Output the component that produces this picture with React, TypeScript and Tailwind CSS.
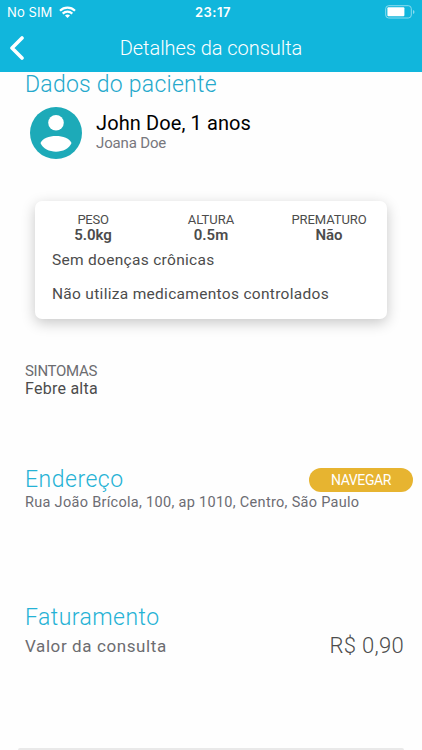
const stats = [
    { label: 'PESO', value: '5.0kg', labelStyle: 'tracking-[-0.3px]' },
    { label: 'ALTURA', value: '0.5m', labelStyle: 'tracking-[0px]' },
    { label: 'PREMATURO', value: 'Não', labelStyle: 'tracking-[-0.1px]' },
];

function StatusBar() {
    return (
        <div className="grid h-6 grid-cols-3 items-center pl-[7px] pr-[7px] text-[13px] leading-6 font-['Inter',sans-serif]">
            <div className="flex items-center gap-[7px]">
                <span className="tracking-[0.1px]">No SIM</span>
                <svg width="17" height="13" viewBox="0 0 17 13" fill="none" stroke="currentColor" strokeWidth="2.2">
                    <path d="M1 4.8C5.2 .6 11.8 .6 16 4.8" />
                    <path d="M3.7 7.6C6.4 5 10.6 5 13.3 7.6" />
                    <path d="M8.5 12L6 9.4C7.4 8.1 9.6 8.1 11 9.4Z" fill="currentColor" stroke="none" />
                </svg>
            </div>
            <span className="text-center font-semibold tracking-[0.5px] pl-[4px]">23:17</span>
            <div className="flex justify-end">
                <svg width="30" height="14" viewBox="0 0 30 14">
                    <rect x=".7" y=".7" width="25.6" height="12.3" rx="3" fill="none" stroke="#8bdcef" strokeWidth="1" />
                    <rect x="2.4" y="2.3" width="17" height="9" rx="1" fill="white" />
                    <path d="M28 5V9C30 8.3 30 5.7 28 5Z" fill="#8bdcef" />
                </svg>
            </div>
        </div>
    );
}

export default function App() {
    return (
        <div className="flex h-[750px] w-[422px] flex-col overflow-hidden bg-[#fefefe] text-[#4c4c4c] font-['Roboto',sans-serif] whitespace-nowrap">
            <header className="h-[72px] shrink-0 bg-[#11b6dc] text-white">
                <StatusBar />
                <div className="grid h-12 grid-cols-[40px_1fr_40px] items-center">
                    <button className="pl-[9px]" aria-label="Voltar">
                        <svg width="16" height="25" viewBox="0 0 16 25" fill="none" stroke="white" strokeWidth="3.6" strokeLinecap="round" strokeLinejoin="round">
                            <path d="M13 2L3 12L13 22" />
                        </svg>
                    </button>
                    <h1 className="text-center text-[20px] font-light leading-[46px] tracking-[-0.05px]">Detalhes da consulta</h1>
                </div>
            </header>

            <main className="flex grow flex-col">
                <section className="pl-[25px]">
                    <h2 className="pt-[1px] text-[23px] font-light leading-6 tracking-[0.25px] text-[#25a9cc]">Dados do paciente</h2>
                    <div className="flex gap-[14px] pl-[5px] pt-[10px]">
                        <svg width="52" height="52" viewBox="0 0 52 52">
                            <circle cx="26" cy="26" r="26" fill="#1daab8" />
                            <circle cx="26" cy="15.7" r="7.8" fill="white" />
                            <path d="M10.5 36C14 26.5 38 26.5 41.5 36C37 47.5 15 47.5 10.5 36Z" fill="white" />
                        </svg>
                        <div className="pt-1">
                            <p className="text-[20px] leading-6 tracking-[0.1px] text-black">John Doe, 1 anos</p>
                            <p className="text-[15px] leading-4 tracking-[-0.15px] text-[#77777d]">Joana Doe</p>
                        </div>
                    </div>
                </section>

                <section className="mx-[35px] mt-[42px] h-[118px] rounded-[7px] bg-white shadow-[0_4px_14px_rgba(0,0,0,0.22)]">
                    <div className="grid grid-cols-[116px_120px_116px] pt-[11px] text-center">
                        {stats.map((stat) => (
                            <div key={stat.label}>
                                <p className={`text-[13px] leading-4 ${stat.labelStyle}`}>{stat.label}</p>
                                <p className="-mt-px text-[15px] font-semibold leading-4">{stat.value}</p>
                            </div>
                        ))}
                    </div>
                    <p className="pl-[17px] pt-2 text-[15.5px] leading-[18px] tracking-[0.3px]">Sem doenças crônicas</p>
                    <p className="pl-[17px] pt-4 text-[15.5px] leading-[18px] tracking-[0.3px]">Não utiliza medicamentos controlados</p>
                </section>

                <section className="pl-[25px] pt-[43px]">
                    <h3 className="text-[15px] leading-[18px] tracking-[-0.3px] text-[#6c6c70]">SINTOMAS</h3>
                    <p className="text-[16px] leading-[18px] tracking-[0.25px]">Febre alta</p>
                </section>

                <section className="pl-[25px] pr-[9px] pt-[69px]">
                    <div className="flex h-[26px] justify-between">
                        <h2 className="text-[23px] font-light leading-[26px] tracking-[0.5px] text-[#25b2d5]">Endereço</h2>
                        <button className="mt-px h-[24px] w-[104px] rounded-full bg-[#e7b430] text-[14px] leading-6 tracking-[-0.4px] text-white">NAVEGAR</button>
                    </div>
                    <p className="pt-px text-[14.5px] leading-[18px] tracking-[0.3px] text-[#6c6c73]">Rua João Brícola, 100, ap 1010, Centro, São Paulo</p>
                </section>

                <section className="pl-[25px] pr-[18px] pt-[93px]">
                    <h2 className="text-[23px] font-light leading-[26px] tracking-[0.45px] text-[#25b2d5]">Faturamento</h2>
                    <div className="flex justify-between pt-[2px] leading-[26px]">
                        <p className="text-[17px] tracking-[0.6px] text-[#6c6c70]">Valor da consulta</p>
                        <p className="text-[22px] font-light tracking-[0.3px]">R$ 0,90</p>
                    </div>
                </section>

                <div className="mx-[18px] mt-auto h-[2px] rounded-t bg-[#e9e9e9]" />
            </main>
        </div>
    );
}
